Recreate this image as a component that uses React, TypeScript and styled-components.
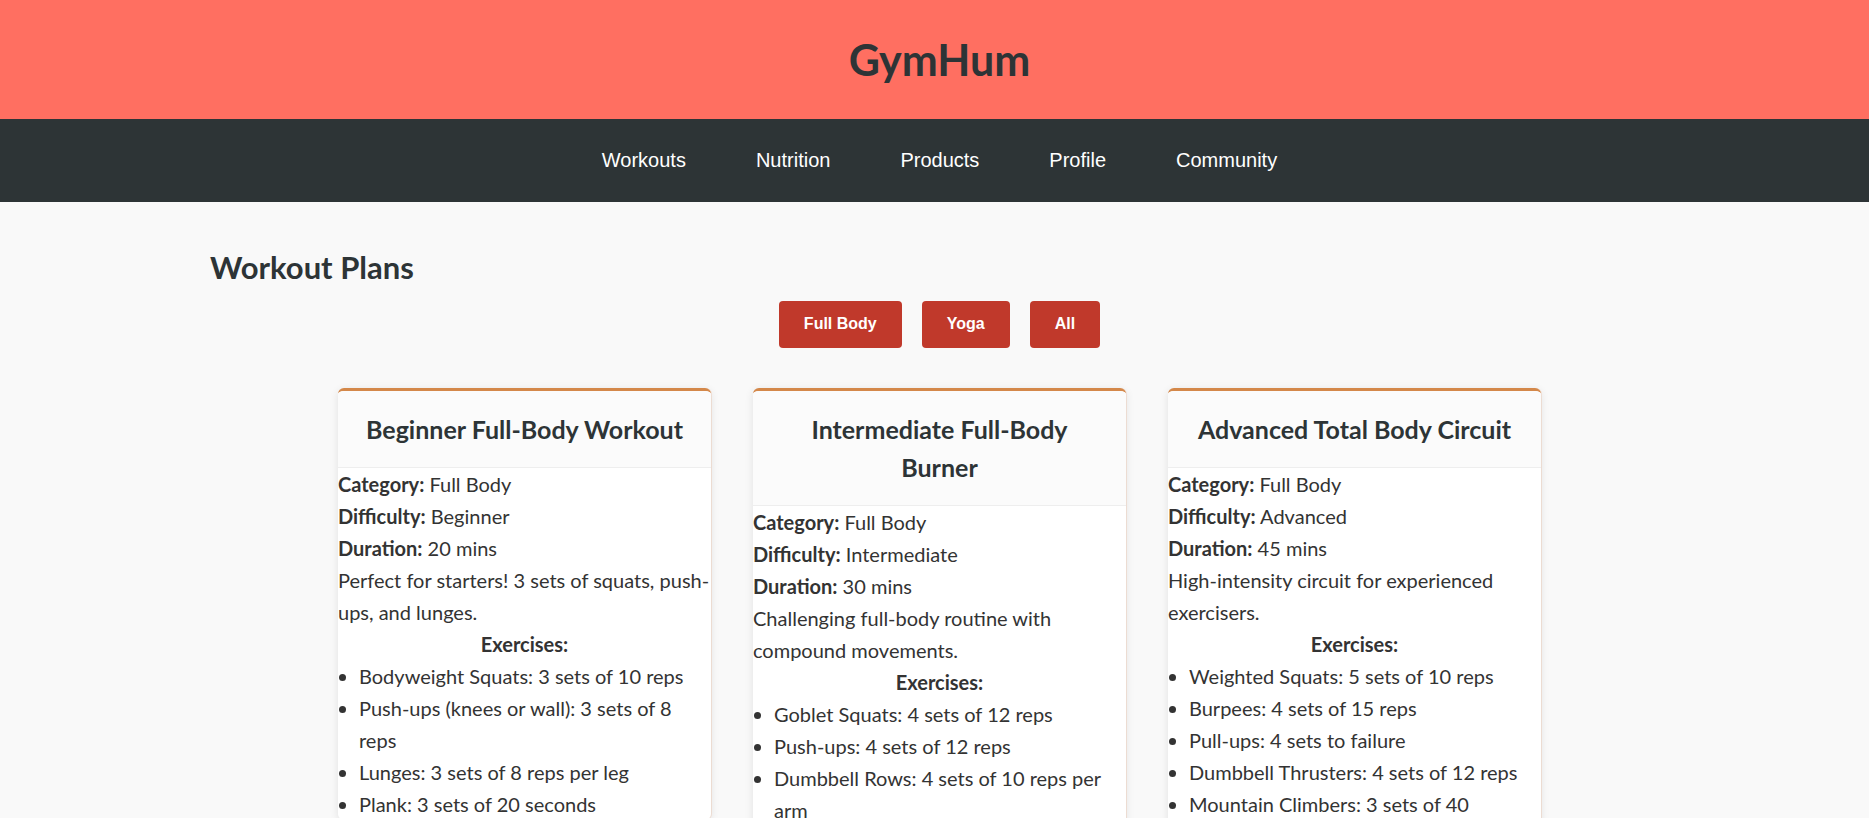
import React from "react";
import styled, { createGlobalStyle } from "styled-components";

const Global = createGlobalStyle`
  html, body { margin: 0; padding: 0; }
  body {
    background: #f9f9f9;
    font-family: "Lato", "Open Sans", sans-serif;
    color: #333;
  }
`;

const Header = styled.header`
  background: #ff6f61;
  height: 119px;
  padding-left: 10px;
  display: flex;
  align-items: center;
  justify-content: center;
`;

const Logo = styled.h1`
  margin: 0;
  font-size: 43px;
  font-weight: 700;
  color: #2d3436;
`;

const Nav = styled.nav`
  background: #2d3436;
  height: 83px;
  padding-left: 10px;
  display: flex;
  align-items: center;
  justify-content: center;
  gap: 70px;
`;

const NavLink = styled.a`
  font-family: "Liberation Sans", Arial, sans-serif;
  font-size: 20px;
  color: #fff;
  text-decoration: none;
`;

const Main = styled.main`
  padding: 46px 200px 40px 210px;
`;

const Title = styled.h2`
  margin: 0 0 15px;
  font-size: 31px;
  font-weight: 700;
  color: #2d3436;
`;

const Filters = styled.div`
  display: flex;
  justify-content: center;
  gap: 20px;
  margin-bottom: 40px;
`;

const FilterButton = styled.button`
  font-family: "Liberation Sans", Arial, sans-serif;
  font-size: 16px;
  font-weight: 700;
  color: #fff;
  background: #c0392b;
  border: none;
  border-radius: 4px;
  padding: 14px 25px 15px;
`;

const Grid = styled.div`
  display: grid;
  grid-template-columns: repeat(3, 373px);
  gap: 42px;
  justify-content: center;
  align-items: start;
`;

const Card = styled.article`
  background: #fff;
  border-top: 3px solid #d4884a;
  border-radius: 6px;
  box-shadow: 0 2px 8px rgba(0, 0, 0, 0.1), 1px 0 0 #f7e6dc;
  overflow: hidden;
`;

const CardHeader = styled.div`
  background: #fbfbfb;
  border-bottom: 1px solid #eee;
  padding: 19px 24px;
  text-align: center;
`;

const CardTitle = styled.h3`
  margin: 0;
  font-size: 25px;
  line-height: 38px;
  font-weight: 700;
  color: #2d3436;
`;

const CardBody = styled.div`
  font-size: 20px;
  line-height: 32px;
  color: #333;
`;

const Line = styled.p`
  margin: 0;
`;

const ExercisesLabel = styled.p`
  margin: 0;
  text-align: center;
  font-weight: 700;
`;

const List = styled.ul`
  margin: 0;
  padding-left: 21px;
`;

type Plan = {
  title: string;
  category: string;
  difficulty: string;
  duration: string;
  desc: string;
  exercises: string[];
};

const plans: Plan[] = [
  {
    title: "Beginner Full-Body Workout",
    category: "Full Body",
    difficulty: "Beginner",
    duration: "20 mins",
    desc: "Perfect for starters! 3 sets of squats, push-ups, and lunges.",
    exercises: [
      "Bodyweight Squats: 3 sets of 10 reps",
      "Push-ups (knees or wall): 3 sets of 8 reps",
      "Lunges: 3 sets of 8 reps per leg",
      "Plank: 3 sets of 20 seconds",
    ],
  },
  {
    title: "Intermediate Full-Body Burner",
    category: "Full Body",
    difficulty: "Intermediate",
    duration: "30 mins",
    desc: "Challenging full-body routine with compound movements.",
    exercises: [
      "Goblet Squats: 4 sets of 12 reps",
      "Push-ups: 4 sets of 12 reps",
      "Dumbbell Rows: 4 sets of 10 reps per arm",
    ],
  },
  {
    title: "Advanced Total Body Circuit",
    category: "Full Body",
    difficulty: "Advanced",
    duration: "45 mins",
    desc: "High-intensity circuit for experienced exercisers.",
    exercises: [
      "Weighted Squats: 5 sets of 10 reps",
      "Burpees: 4 sets of 15 reps",
      "Pull-ups: 4 sets to failure",
      "Dumbbell Thrusters: 4 sets of 12 reps",
      "Mountain Climbers: 3 sets of 40 seconds",
    ],
  },
];

export default function App() {
  return (
    <>
      <Global />
      <Header>
        <Logo>GymHum</Logo>
      </Header>
      <Nav>
        {["Workouts", "Nutrition", "Products", "Profile", "Community"].map((l) => (
          <NavLink key={l} href="#">
            {l}
          </NavLink>
        ))}
      </Nav>
      <Main>
        <Title>Workout Plans</Title>
        <Filters>
          <FilterButton>Full Body</FilterButton>
          <FilterButton>Yoga</FilterButton>
          <FilterButton>All</FilterButton>
        </Filters>
        <Grid>
          {plans.map((p) => (
            <Card key={p.title}>
              <CardHeader>
                <CardTitle>{p.title}</CardTitle>
              </CardHeader>
              <CardBody>
                <Line>
                  <strong>Category:</strong> {p.category}
                </Line>
                <Line>
                  <strong>Difficulty:</strong> {p.difficulty}
                </Line>
                <Line>
                  <strong>Duration:</strong> {p.duration}
                </Line>
                <Line>{p.desc}</Line>
                <ExercisesLabel>Exercises:</ExercisesLabel>
                <List>
                  {p.exercises.map((e) => (
                    <li key={e}>{e}</li>
                  ))}
                </List>
              </CardBody>
            </Card>
          ))}
        </Grid>
      </Main>
    </>
  );
}
